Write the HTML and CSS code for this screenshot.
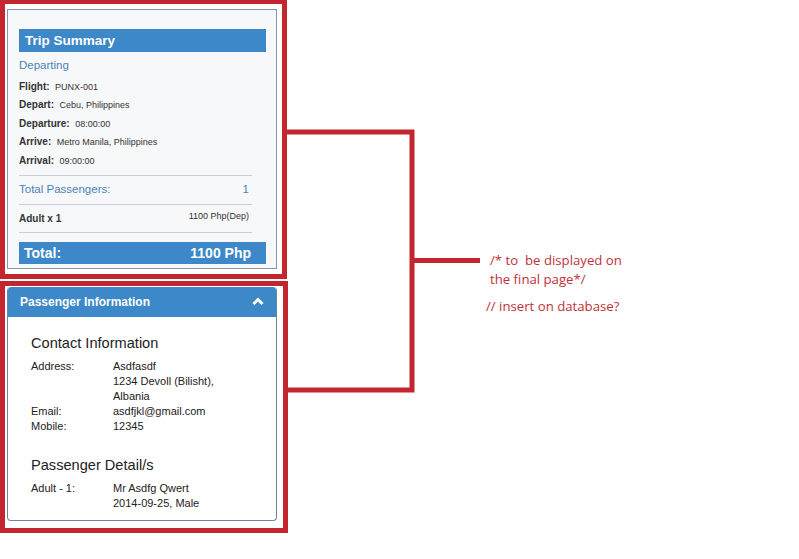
FILE: index.html
```html
<!DOCTYPE html>
<html>
<head>
<meta charset="utf-8">
<link rel="stylesheet" href="styles.css">
</head>
<body>
<div class="page">
  <div class="left">
    <div class="redbox top">
      <div class="panel trip">
        <div class="bar title">Trip Summary</div>
        <div class="departing">Departing</div>
        <div class="row"><b>Flight:</b>&nbsp; <span>PUNX-001</span></div>
        <div class="row"><b>Depart:</b>&nbsp; <span>Cebu, Philippines</span></div>
        <div class="row"><b>Departure:</b>&nbsp; <span>08:00:00</span></div>
        <div class="row"><b>Arrive:</b>&nbsp; <span>Metro Manila, Philippines</span></div>
        <div class="row"><b>Arrival:</b>&nbsp; <span>09:00:00</span></div>
        <div class="sum">
          <div class="line pax"><span>Total Passengers:</span><span>1</span></div>
          <div class="line adult"><b>Adult x 1</b><span class="price">1100 Php(Dep)</span></div>
        </div>
        <div class="bar total"><span>Total:</span><span>1100 Php</span></div>
      </div>
    </div>
    <div class="redbox bottom">
      <div class="panel pinfo">
        <div class="phead">
          <span>Passenger Information</span>
          <svg class="chev" width="12" height="9" viewBox="0 0 12 9"><polyline points="1.5,7 6,2.5 10.5,7" fill="none" stroke="#fff" stroke-width="3"/></svg>
        </div>
        <div class="pbody">
          <h3>Contact Information</h3>
          <div class="kv"><div class="k">Address:</div><div class="v">Asdfasdf<br>1234 Devoll (Bilisht),<br>Albania</div></div>
          <div class="kv"><div class="k">Email:</div><div class="v">asdfjkl@gmail.com</div></div>
          <div class="kv"><div class="k">Mobile:</div><div class="v">12345</div></div>
          <h3 class="second">Passenger Detail/s</h3>
          <div class="kv"><div class="k">Adult - 1:</div><div class="v">Mr Asdfg Qwert<br>2014-09-25, Male</div></div>
        </div>
      </div>
    </div>
  </div>
  <svg class="connector" width="500" height="559" viewBox="0 0 500 559">
    <g fill="none" stroke="#c3262f" stroke-width="5" stroke-linecap="butt">
      <polyline points="285,132 412,132 412,390 287,390"/>
      <line x1="412" y1="260.5" x2="480" y2="260.5"/>
      <line x1="0" y1="126" x2="3" y2="126"/>
    </g>
  </svg>
  <div class="note">
    <p class="n1">/* to &nbsp;be displayed on<br>the final page*/</p>
    <p class="n2">// insert on database?</p>
  </div>
</div>
</body>
</html>
```
FILE: styles.css
```css
* { box-sizing: border-box; }
html, body { margin: 0; padding: 0; background: #fff; }
body { font-family: "Liberation Sans", Arial, sans-serif; color: #333; }
.page { position: relative; width: 799px; height: 559px; }
.left { width: 290px; padding-top: 0; }
.redbox { border: 5px solid #c3262f; }
.redbox.top { width: 287px; height: 279px; border-top-width: 4px; padding: 5px 0 0 2px; }
.redbox.bottom { width: 288px; height: 252px; margin-top: 2px; padding: 1px 0 0 2px; }
.panel { width: 270px; border: 1px solid #8595a6; }
.trip { height: 260px; background: #f7f8fa; padding: 19px 10px 0 11px; }
.bar { background: #3d88c8; color: #fff; font-weight: bold; display: flex; justify-content: space-between; align-items: center; }
.title { height: 23px; font-size: 13.5px; padding-left: 6px; }
.departing { height: 26px; line-height: 26px; font-size: 11.5px; color: #4c83b5; }
.row { height: 18.4px; line-height: 18px; font-size: 10px; color: #333; }
.row b { font-weight: bold; }
.row span { font-size: 9px; }
.sum { width: 233px; margin-top: 5px; border-top: 1px solid #c9ced3; }
.line { display: flex; justify-content: space-between; align-items: center; border-bottom: 1px solid #c9ced3; padding-right: 3px; }
.pax { height: 29px; font-size: 11.5px; color: #4c83b5; padding-bottom: 1px; }
.adult { height: 28px; font-size: 10px; }
.adult .price { font-size: 9px; margin-top: -4px; }
.total { height: 22px; margin-top: 9px; font-size: 14px; padding: 0 15px 0 5px; }
.pinfo { height: 234px; border-radius: 4px; border-color: #6f8499; background: #fff; overflow: hidden; border-top: 0; }
.phead { height: 30px; background: #3d88c8; color: #fff; font-weight: bold; font-size: 12px; display: flex; align-items: center; justify-content: space-between; padding: 0 12px 0 12px; border-radius: 3px 3px 0 0; }
.chev { margin-top: -2px; }
.pbody { padding: 17px 0 0 23px; font-size: 11px; color: #222; }
.pbody h3 { margin: 0 0 7px; font-size: 14.6px; font-weight: normal; color: #222; line-height: 18px; }
.pbody h3.second { margin-top: 22px; }
.kv { display: flex; line-height: 15px; }
.k { width: 82px; }
.connector { position: absolute; left: 0; top: 0; }
.note { position: absolute; left: 486px; top: 251px; font-family: "Open Sans", "Liberation Sans", sans-serif; font-size: 13.2px; color: #c0323a; }
.note p { margin: 0; }
.n1 { padding-left: 4px; line-height: 19px; }
.n2 { margin-top: 8px !important; }
```
